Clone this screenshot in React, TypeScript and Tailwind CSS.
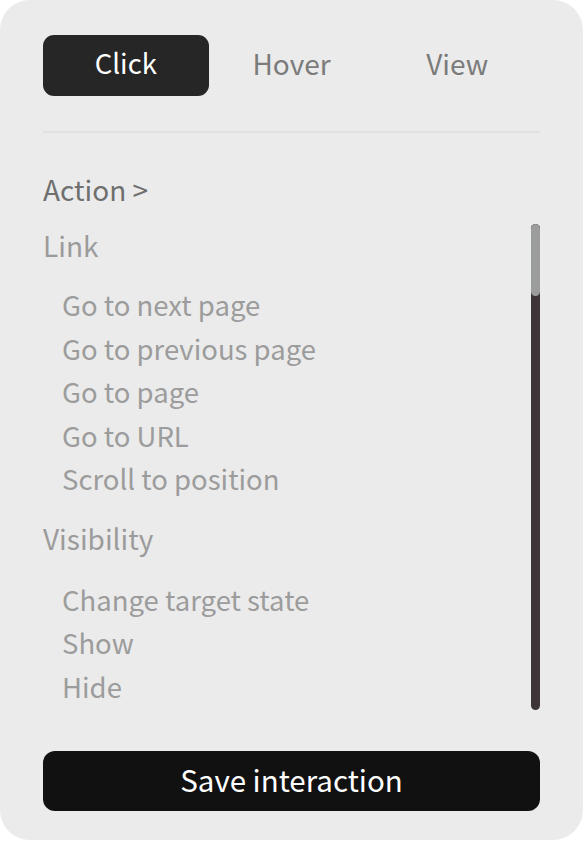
import { Fragment } from 'react';

const TABS = ['Click', 'Hover', 'View'];

const GROUPS = [
    {
        title: 'Link',
        items: ['Go to next page', 'Go to previous page', 'Go to page', 'Go to URL', 'Scroll to position'],
    },
    {
        title: 'Visibility',
        items: ['Change target state', 'Show', 'Hide'],
    },
];

const FONT = "font-['Noto_Sans_CJK_JP','Noto_Sans',sans-serif]";

export default function App() {
    return (
        <div className={`min-h-[841px] bg-white ${FONT}`}>
            <div className="flex h-[840px] flex-col rounded-[30px] bg-[#ebebeb] px-[43px] pt-[35px]">
                <div className="grid h-[61px] grid-cols-3">
                    {TABS.map((tab, index) => (
                        <button
                            key={tab}
                            className={
                                index === 0
                                    ? 'rounded-[11px] bg-[#262626] pb-[5px] text-[27.5px] text-white'
                                    : 'pb-[5px] text-[28px] text-[#7b7b7b]'
                            }
                        >
                            {tab}
                        </button>
                    ))}
                </div>

                <div className="mt-[35px] h-[2px] bg-[#dfe2e5]" />

                <div className="mt-[35px] text-[28px] leading-[42px] text-[#6f6f6f]">Action &gt;</div>

                <div className="mt-[14px] flex h-[486px]">
                    <div className="flex-1 overflow-hidden">
                        {GROUPS.map((group, gi) => (
                            <Fragment key={group.title}>
                                <div
                                    className={
                                        gi === 0
                                            ? 'text-[28px] leading-[42px] text-[#9b9b9b]'
                                            : 'mt-[16px] text-[28px] leading-[42px] text-[#9b9b9b]'
                                    }
                                >
                                    {group.title}
                                </div>
                                <ul className={gi === 0 ? 'mt-[17px] pl-[19px]' : 'mt-[19px] pl-[19px]'}>
                                    {group.items.map((item) => (
                                        <li key={item} className="text-[27.5px] leading-[43.5px] text-[#9c9c9c]">
                                            {item}
                                        </li>
                                    ))}
                                </ul>
                            </Fragment>
                        ))}
                    </div>
                    <div className="flex w-[9px] flex-col overflow-hidden rounded-full bg-[#3e3538]">
                        <div className="h-[72px] rounded-full bg-[#9a9d9c]" />
                    </div>
                </div>

                <button className="mt-[41px] h-[60px] rounded-[12px] bg-[#111111] pb-[4px] text-[29.5px] text-white">
                    Save interaction
                </button>
            </div>
        </div>
    );
}
